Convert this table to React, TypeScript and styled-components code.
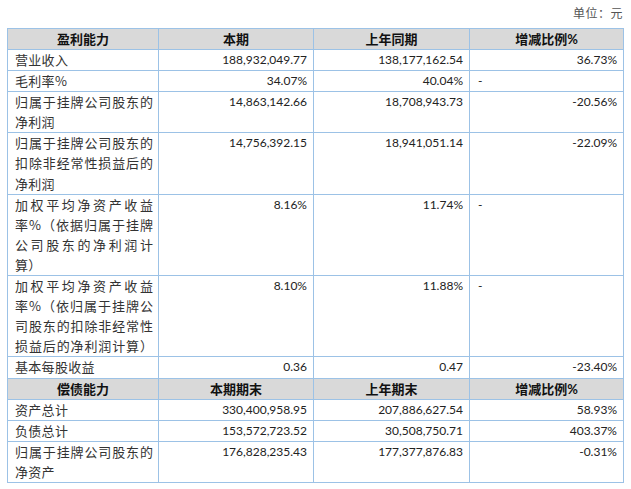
import React from "react";
import styled, { createGlobalStyle } from "styled-components";

const Global = createGlobalStyle`
  html, body { margin: 0; padding: 0; background: #fff; }
  body { font-family: Lato, "Noto Sans CJK SC", sans-serif; color: #222; }
`;

const Page = styled.div`
  width: 631px;
  padding: 0 7px 0 7px;
  box-sizing: border-box;
`;

const Unit = styled.div`
  height: 28px;
  box-sizing: border-box;
  padding-top: 5px;
  padding-right: 1px;
  text-align: right;
  font-family: "Noto Sans CJK SC", sans-serif;
  font-size: 12px;
  line-height: 16px;
  color: #555;
  letter-spacing: 0.5px;
`;

const Table = styled.table`
  border-collapse: collapse;
  table-layout: fixed;
  font-size: 12px;
`;

const HeadCell = styled.th<{ $w?: number }>`
  ${(p) => (p.$w ? `width: ${p.$w}px;` : "")}
  background: #d9d9d9;
  border: 1px solid #9cc2e6;
  font-family: Lato, "Noto Sans CJK SC", sans-serif;
  font-weight: 700;
  font-size: 13px;
  line-height: 20px;
  padding: 0;
  text-align: center;
  color: #111;
`;

const LabelCell = styled.td`
  border: 1px solid #9cc2e6;
  padding: 0 5px 0 7px;
  vertical-align: top;
  font-family: "Noto Sans CJK SC", sans-serif;
  font-size: 13px;
  line-height: 20.1px;
  color: #333;
  letter-spacing: 0.3px;
`;

const Line = styled.span<{ $spread?: boolean }>`
  display: block;
  white-space: nowrap;
  ${(p) =>
    p.$spread
      ? "text-align: justify; text-align-last: justify; letter-spacing: 0;"
      : ""}
`;

const NumCell = styled.td<{ $left?: boolean }>`
  border: 1px solid #9cc2e6;
  padding: ${(p) => (p.$left ? "0 6px 0 8px" : "0 6px 0 6px")};
  vertical-align: top;
  text-align: ${(p) => (p.$left ? "left" : "right")};
  font-family: Lato, sans-serif;
  font-size: 12px;
  line-height: 20.1px;
  color: #222;
`;

type Row = { label: string[]; spread?: number; vals: string[] };

const rows1: Row[] = [
  { label: ["营业收入"], vals: ["188,932,049.77", "138,177,162.54", "36.73%"] },
  { label: ["毛利率%"], vals: ["34.07%", "40.04%", "-"] },
  {
    label: ["归属于挂牌公司股东的", "净利润"],
    spread: 1,
    vals: ["14,863,142.66", "18,708,943.73", "-20.56%"],
  },
  {
    label: ["归属于挂牌公司股东的", "扣除非经常性损益后的", "净利润"],
    spread: 2,
    vals: ["14,756,392.15", "18,941,051.14", "-22.09%"],
  },
  {
    label: ["加权平均净资产收益", "率%（依据归属于挂牌", "公司股东的净利润计", "算）"],
    spread: 3,
    vals: ["8.16%", "11.74%", "-"],
  },
  {
    label: ["加权平均净资产收益", "率%（依归属于挂牌公", "司股东的扣除非经常性", "损益后的净利润计算）"],
    spread: 4,
    vals: ["8.10%", "11.88%", "-"],
  },
  { label: ["基本每股收益"], vals: ["0.36", "0.47", "-23.40%"] },
];

const rows2: Row[] = [
  { label: ["资产总计"], vals: ["330,400,958.95", "207,886,627.54", "58.93%"] },
  { label: ["负债总计"], vals: ["153,572,723.52", "30,508,750.71", "403.37%"] },
  {
    label: ["归属于挂牌公司股东的", "净资产"],
    spread: 1,
    vals: ["176,828,235.43", "177,377,876.83", "-0.31%"],
  },
];

const DataRow = ({ row }: { row: Row }) => (
  <tr>
    <LabelCell>
      {row.label.map((l, i) => (
        <Line key={i} $spread={row.spread !== undefined && i < row.spread}>
          {l}
        </Line>
      ))}
    </LabelCell>
    {row.vals.map((v, i) => (
      <NumCell key={i} $left={v === "-"}>
        {v}
      </NumCell>
    ))}
  </tr>
);

export default function App() {
  return (
    <Page>
      <Global />
      <Unit>单位：元</Unit>
      <Table>
        <tbody>
          <tr>
            <HeadCell $w={150}>盈利能力</HeadCell>
            <HeadCell $w={154}>本期</HeadCell>
            <HeadCell $w={155}>上年同期</HeadCell>
            <HeadCell $w={153}>增减比例%</HeadCell>
          </tr>
          {rows1.map((r, i) => (
            <DataRow key={i} row={r} />
          ))}
          <tr>
            <HeadCell>偿债能力</HeadCell>
            <HeadCell>本期期末</HeadCell>
            <HeadCell>上年期末</HeadCell>
            <HeadCell>增减比例%</HeadCell>
          </tr>
          {rows2.map((r, i) => (
            <DataRow key={i} row={r} />
          ))}
        </tbody>
      </Table>
    </Page>
  );
}
